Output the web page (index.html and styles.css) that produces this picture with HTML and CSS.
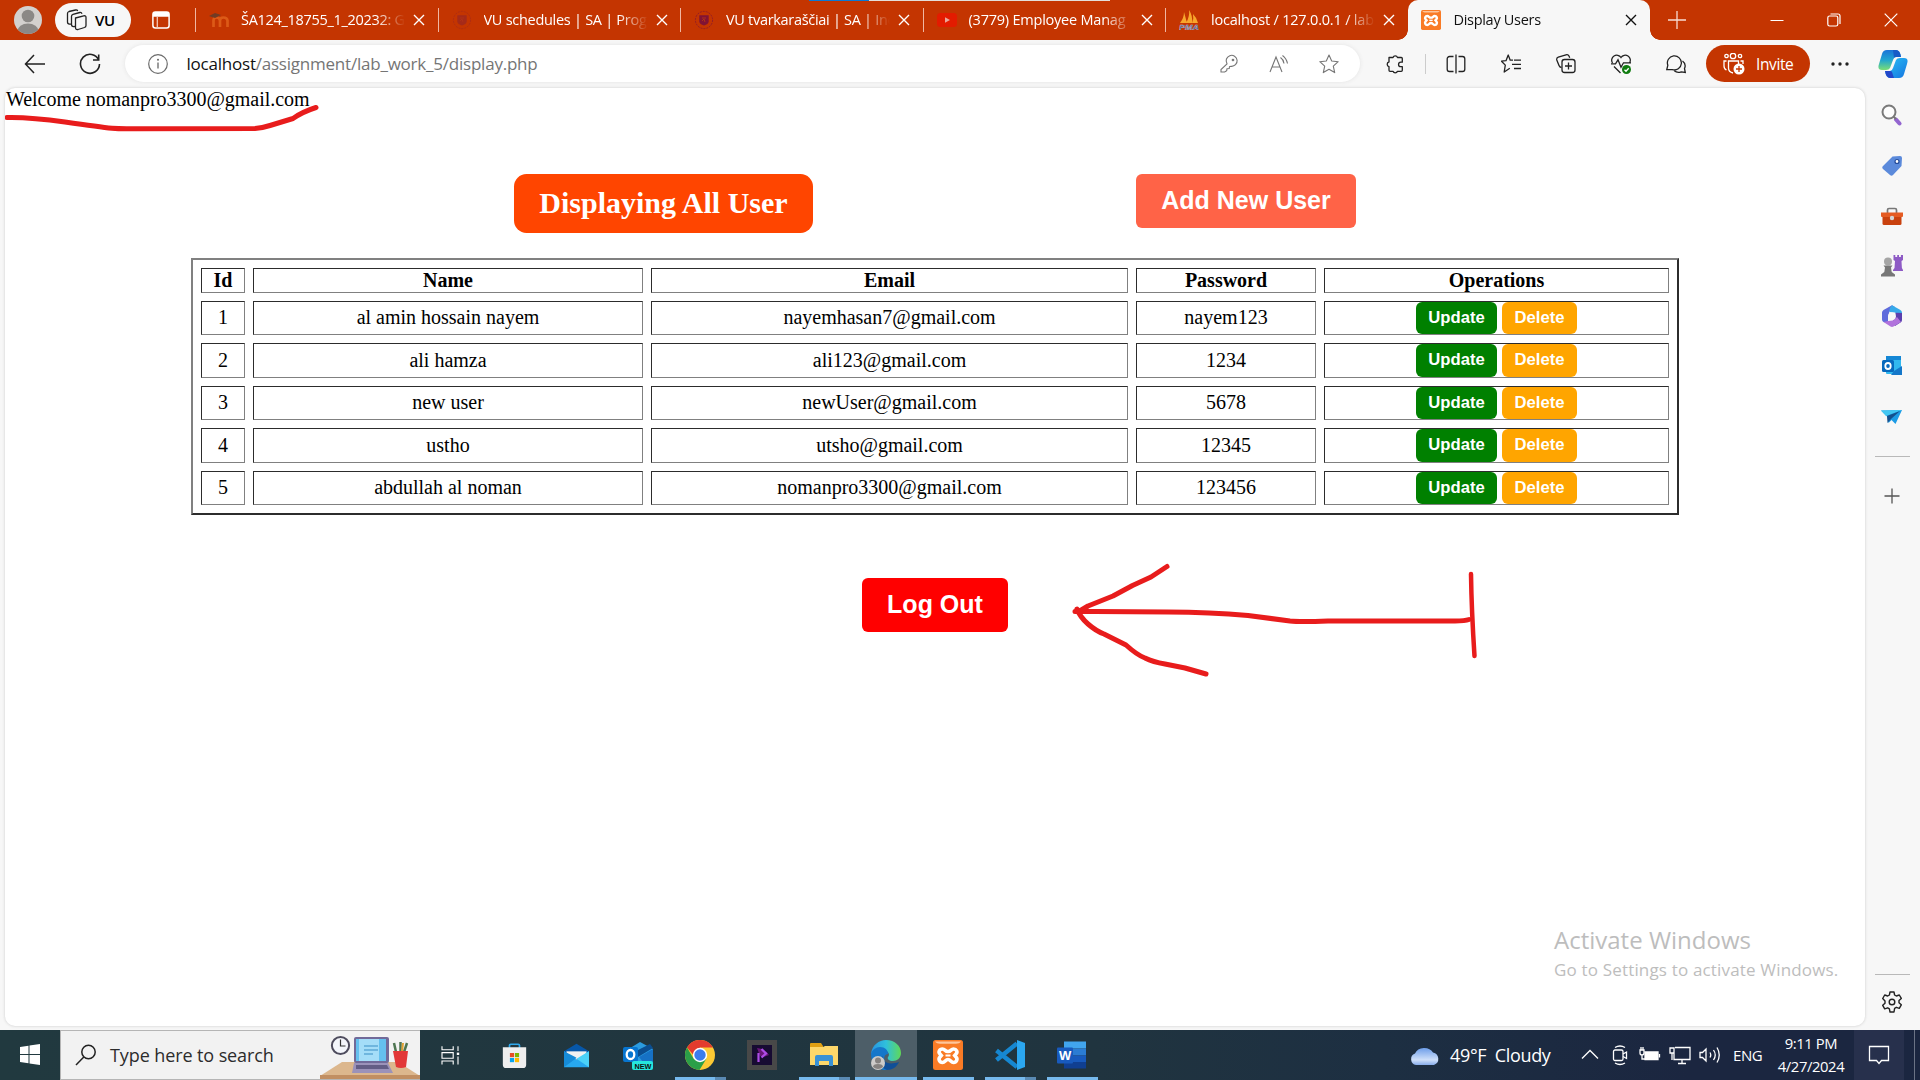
FILE: index.html
```html
<!DOCTYPE html>
<html lang="en">
<head>
<meta charset="utf-8">
<title>Display Users</title>
<link rel="stylesheet" href="styles.css">
</head>
<body>
<svg class="defs" width="0" height="0">
  <defs>
    <symbol id="x" viewBox="0 0 12 12"><path d="M1 1l10 10M11 1L1 11" fill="none" stroke="currentColor" stroke-width="1.400"/></symbol>
    <symbol id="shield" viewBox="0 0 20 20"><circle cx="10" cy="10" r="8.600" fill="none" stroke="currentColor" stroke-width="1" stroke-dasharray="2 1" opacity=".7"/><path d="M5.300 5.300h9.400v6c0 2.200-2 3.400-4.700 4.200-2.700-.8-4.700-2-4.700-4.200z" fill="currentColor"/><path d="M8 8h4M8 11l2-2 1 3" stroke="#b03018" fill="none"/></symbol>
    <symbol id="xampp" viewBox="0 0 30 30"><rect width="30" height="30" rx="2.500" fill="#f97b26"/><path d="M2 1.500h26c-1 1.800-3 2.200-5 2.200H7c-2 0-4-.4-5-2.200z" fill="#fdc59b"/><path d="M9.500 9c-3 0-4.500 3-2.500 5l1.300 1.500L7 17c-2 2-.5 5.500 2.500 5.500 2.500 0 3-3 5.500-3s3 3 5.500 3c3 0 4.500-3.500 2.500-5.500l-1.300-1.500L23 14c2-2 .5-5-2.500-5-2.500 0-2.300 2.500-5.500 2.500S12 9 9.500 9z" fill="none" stroke="#fff" stroke-width="3.600"/><path d="M12.500 15.500h5" stroke="#fff" stroke-width="2"/></symbol>
  </defs>
</svg>

<header class="titlebar">
  <div class="profile"><svg width="28" height="28" viewBox="0 0 28 28"><clipPath id="pc"><circle cx="14" cy="14" r="14"/></clipPath><g clip-path="url(#pc)"><rect width="28" height="28" fill="#d3d0ce"/><circle cx="14" cy="10" r="6.300" fill="#8b8886"/><ellipse cx="14" cy="25" rx="10.500" ry="7.500" fill="#8b8886"/></g></svg></div>
  <div class="workspace"><svg width="22" height="22" viewBox="0 0 22 22" fill="none" stroke="#222" stroke-width="1.300" stroke-linejoin="round"><path d="M9.500 9l8.200-2.200q2.300-.4 2.300 1.700v8q0 1.500-1.500 2l-6.500 2q-2.500.5-2.500-2z"/><path d="M9 17.500l-1.500.2q-2-.2-2-2.200V7.300q0-1.500 1.500-2l6.800-1.800q1.700-.3 2.200 1.200M5 15l-1.500.2q-2-.2-2-2.200V4.500q0-1.500 1.500-2L9.500 1q1.700-.3 2.200 1"/></svg><span>VU</span></div>
  <div class="tabmenu"><svg width="18" height="18" viewBox="0 0 18 18"><rect x=".9" y=".9" width="16.200" height="16.200" rx="2.500" fill="none" stroke="#fff" stroke-width="1.500"/><path d="M1 3a2 2 0 012-2h12a2 2 0 012 2v2.700H1z" fill="#fff"/><path d="M5.300 5v12" stroke="#f5c8b8" stroke-width="1.300"/></svg></div>
  <nav class="tabs">
    <div class="tab"><svg class="fav" viewBox="0 0 20 20"><path d="M4.500 17V10.500q0-3 3-3t3.500 3V17M11 10.500q0-3 3.500-3t4 3V17" fill="none" stroke="#dc5a17" stroke-width="2.700"/><path d="M0 6l6-3 6 2-6 3z" fill="#713b24"/></svg><span class="t t0">ŠA124_18755_1_20232: G</span><svg class="cl"><use href="#x"/></svg></div>
    <div class="tab"><svg class="fav maroon1"><use href="#shield"/></svg><span class="t t1">VU schedules | SA | Prog</span><svg class="cl"><use href="#x"/></svg></div>
    <div class="tab"><svg class="fav maroon2"><use href="#shield"/></svg><span class="t t2">VU tvarkaraščiai | SA | Ind</span><svg class="cl"><use href="#x"/></svg></div>
    <div class="tab"><svg class="fav" viewBox="0 0 20 20"><rect y="3" width="20" height="14" rx="3.500" fill="#e31b00"/><path d="M8 7.200l5 2.800-5 2.800z" fill="#e9a79a"/></svg><span class="t t3">(3779) Employee Manag</span><svg class="cl"><use href="#x"/></svg></div>
    <div class="tab"><svg class="fav" viewBox="0 0 20 20"><path d="M1 13Q5 8 5 2l3 11zM7 13q4-7 3-13 4 6 3 13zM13 13q2-4 1-9 4 4 5 9z" fill="#f8a62c"/><text x="0" y="20" class="pma" textLength="20" lengthAdjust="spacingAndGlyphs">PMA</text></svg><span class="t t4">localhost / 127.0.0.1 / lab</span><svg class="cl"><use href="#x"/></svg></div>
    <div class="tab active"><svg class="fav"><use href="#xampp"/></svg><span class="t t5">Display Users</span><svg class="cl"><use href="#x"/></svg></div>
  </nav>
  <svg class="newtab" width="18" height="18" viewBox="0 0 18 18"><path d="M9 0v18M0 9h18" stroke="#f8dcd2" stroke-width="1.300"/></svg>
  <div class="winctl">
    <svg width="14" height="14" viewBox="0 0 14 14"><path d="M.5 7.500h13" stroke="#fff"/></svg>
    <svg width="14" height="14" viewBox="0 0 14 14" fill="none" stroke="#fff" stroke-width="1.200"><rect x=".8" y="3" width="10" height="10" rx="1.800"/><path d="M3.500 1h7.500a2 2 0 012 2v8"/></svg>
    <svg width="14" height="14" viewBox="0 0 14 14"><path d="M.7.7l12.600 12.600M13.300.7L.7 13.300" stroke="#fff" stroke-width="1.200"/></svg>
  </div>
  <div class="sharebar"></div>
</header>

<section class="toolbar">
  <svg class="back" width="22" height="20" viewBox="0 0 22 20"><path d="M10 1L1.500 10l8.500 9M1.500 10H21" fill="none" stroke="#222" stroke-width="1.500"/></svg>
  <svg class="reload" width="22" height="22" viewBox="0 0 22 22"><path d="M19.700 7A9.500 9.500 0 1020.500 11M19.700 1.500V7H14" fill="none" stroke="#222" stroke-width="1.600"/></svg>
  <div class="omnibox">
    <svg width="20" height="20" viewBox="0 0 20 20"><circle cx="10" cy="10" r="9.300" fill="none" stroke="#6b6b6b" stroke-width="1.200"/><path d="M10 8.500v6" stroke="#666" stroke-width="1.300"/><circle cx="10" cy="5.800" r="1" fill="#666"/></svg>
    <span class="url"><b>localhost</b>/assignment/lab_work_5/display.php</span>
    <div class="omni-icons">
      <svg viewBox="0 0 20 20"><path d="M8 9.800A5.500 5.500 0 1112 12.300l-1.500.3-.3 1.900-2.200.2-.3 2-2 1.300H2v-2.500z"/><circle cx="14" cy="6" r=".8"/></svg>
      <svg viewBox="0 0 20 20"><path d="M1 18L7 3l6 15M3 13h8M11.500 3.500q3 2 3.500 6M13.500 1.500q4 3 5 8"/></svg>
      <svg viewBox="0 0 20 20"><path d="M10 1l2.700 6 6.500.7-4.900 4.400 1.400 6.500L10 15.300l-5.700 3.300 1.400-6.500L.8 7.700l6.500-.7z" stroke-linejoin="round"/></svg>
    </div>
  </div>
  <div class="tools">
    <svg viewBox="0 0 20 20"><path d="M4 3.500h4a2.400 2.400 0 014.500 0h3.800q1 0 1 1v3.700h-1.500a2.200 2.200 0 100 4.500h1.500v3.600q0 1-1 1h-3.800a2.400 2.400 0 01-4.500 0H5q-1 0-1-1v-3.600a2.500 2.500 0 010-4.800z" stroke-linejoin="round"/></svg>
    <i class="vsep"></i>
    <svg viewBox="0 0 20 20"><path d="M7.500 2.500H3.500a2.300 2.300 0 00-2.300 2.300v10.400a2.300 2.300 0 002.300 2.300h4M12.500 2.500h4a2.300 2.300 0 012.300 2.300v10.400a2.300 2.300 0 01-2.300 2.300h-4M10 .5v19"/></svg>
    <svg viewBox="0 0 20 20"><path d="M12 6.200H9.200L7.200 1 5 6.700l-4.500.5 3.800 3.900L3.200 18l5.600-3.700M13 6.200h7M11 10.300h9M13 14.500h7" stroke-linejoin="round"/></svg>
    <svg viewBox="0 0 20 20"><path d="M5.500 13.500Q3.600 13.300 3 11.500L.8 6q-.5-2 1.500-2.800L10 .8q2-.6 3 1.200l.7 1.700"/><rect x="6" y="5.500" width="13" height="13" rx="2.500"/><path d="M12.500 8.500v7M9 12h7"/></svg>
    <svg viewBox="0 0 20 20"><path d="M1.500 9A5 5 0 0110 3.500 5 5 0 0118.500 9M3 12.500l6.500 6.500M0 9.800h4.500l2.500-4 3 7.500 2.500-4.500H20"/><circle cx="15.500" cy="15.500" r="4.500" fill="#107c10" stroke="none"/><path d="M13.500 15.700l1.500 1.500 2.700-3" stroke="#fff"/></svg>
    <svg viewBox="0 0 20 20"><path d="M.8 15.500l1-4.200a7 7 0 114.500 4.300zM16.500 7q4 3 2 7.500l.8 4-4-.7q-4 1.700-7-1"/></svg>
  </div>
  <div class="invite"><svg width="22" height="22" viewBox="0 0 22 22" fill="none" stroke="#fff" stroke-width="1.300"><circle cx="3.500" cy="3" r="1.700"/><circle cx="10" cy="3" r="2.700"/><circle cx="17" cy="3" r="1.700"/><path d="M3.500 17q-2.500-1-2.500-4V8h2.500M10 20q-4.500-1-4.500-5V8h10v3M17.500 8H20v3"/><circle cx="16" cy="16" r="5.500" fill="#fff" stroke="none"/><path d="M16 13v6M13 16h6" stroke="#c43501"/></svg><span>Invite</span></div>
  <svg class="dots" width="18" height="4" viewBox="0 0 18 4"><circle cx="2" cy="2" r="1.700"/><circle cx="9" cy="2" r="1.700"/><circle cx="16" cy="2" r="1.700"/></svg>
  <svg class="copilot" width="30" height="28" viewBox="0 0 30 28"><defs><linearGradient id="cpa" x1="0" y1="0" x2="0" y2="1"><stop offset="0" stop-color="#1a73d8"/><stop offset=".5" stop-color="#20a5d0"/><stop offset="1" stop-color="#7ade75"/></linearGradient><linearGradient id="cpb" x1="0" y1="0" x2="1" y2="1"><stop offset="0" stop-color="#28c3f6"/><stop offset="1" stop-color="#1674e0"/></linearGradient></defs><path d="M9 0h9q4 0 5 7h-5q-2 0-3 3l-3 8q-1 2-4 2H4q-5 0-3-6L4 4q1-4 5-4z" fill="url(#cpa)"/><path d="M21 28h-9q-4 0-5-7h5q2 0 3-3l3-8q1-2 4-2h4q5 0 3 6l-3 10q-1 4-5 4z" fill="url(#cpb)"/><path d="M15 0h3q4 0 5 7h-5q-2 0-2 1z" fill="#175bc7"/><path d="M7 21h5q2 0 2 1l2 6h-4q-4 0-5-7z" fill="#2347ca"/></svg>
</section>

<div class="middle">
  <main class="page">
    <div class="welcome">Welcome nomanpro3300@gmail.com</div>
    <div class="actions">
      <h1>Displaying All User</h1>
      <button class="add">Add New User</button>
    </div>
    <table>
      <colgroup><col class="c1"><col class="c2"><col class="c3"><col class="c4"><col class="c5"></colgroup>
      <tr class="head"><th>Id</th><th>Name</th><th>Email</th><th>Password</th><th>Operations</th></tr>
      <tr><td>1</td><td>al amin hossain nayem</td><td>nayemhasan7@gmail.com</td><td>nayem123</td><td><div class="ops"><button class="upd">Update</button><button class="del">Delete</button></div></td></tr>
      <tr class="tall"><td>2</td><td>ali hamza</td><td>ali123@gmail.com</td><td>1234</td><td><div class="ops"><button class="upd">Update</button><button class="del">Delete</button></div></td></tr>
      <tr><td>3</td><td>new user</td><td>newUser@gmail.com</td><td>5678</td><td><div class="ops"><button class="upd">Update</button><button class="del">Delete</button></div></td></tr>
      <tr class="tall"><td>4</td><td>ustho</td><td>utsho@gmail.com</td><td>12345</td><td><div class="ops"><button class="upd">Update</button><button class="del">Delete</button></div></td></tr>
      <tr><td>5</td><td>abdullah al noman</td><td>nomanpro3300@gmail.com</td><td>123456</td><td><div class="ops"><button class="upd">Update</button><button class="del">Delete</button></div></td></tr>
    </table>
    <button class="logout">Log Out</button>
    <div class="watermark"><p class="w1">Activate Windows</p><p class="w2">Go to Settings to activate Windows.</p></div>
    <svg class="ink" viewBox="5 88 1860 938">
      <path d="M7 117.500Q30 117 65 122T112 128.300Q120 129 135 128.700L255 128.500Q262 128 270 125.500L293 118.500Q302 112 316 107.500"/>
      <path d="M1075 611.500H1095L1168 612Q1210 612 1248 615.500L1290 621Q1300 622 1328 621H1455Q1465 621 1469 619.500"/>
      <path d="M1167 566.500L1151 577 1132.500 585.500 1113 596 1088 606 1078 612M1077 609Q1080 617 1088 624T1104 634L1126 645Q1137 655 1145 658 1153 662 1165 664L1185 668 1206 674"/>
      <path class="bar" d="M1471 574Q1471.500 610 1474.500 656"/>
    </svg>
  </main>
  <aside class="sidebar">
    <svg viewBox="0 0 22 22"><path d="M15 15.500l3.500 4" stroke="#9365d0" stroke-width="4" stroke-linecap="round"/><path d="M12.500 12.500l2.500 2.500" stroke="#777" stroke-width="2"/><circle cx="8" cy="8" r="6.500" fill="#fdfdfd" stroke="#7a7a7a" stroke-width="2"/></svg>
    <svg viewBox="0 0 22 22"><path d="M11.500 2.500L19 2q2 0 2 2l-.5 8-8.500 9q-1.500 1.500-3 0L2 15q-1.500-1.500 0-3z" fill="#5b8adb"/><circle cx="16" cy="7.500" r="2" fill="#fff" stroke="#244b99" stroke-width="1.200"/></svg>
    <svg viewBox="0 0 22 22"><path d="M6.500 8V5q0-1.500 1.500-1.500h6q1.500 0 1.500 1.500v3" fill="none" stroke="#777" stroke-width="1.700"/><rect x="1.500" y="9" width="19" height="11" rx="1.500" fill="#c9410e"/><path d="M0 7.500h22v3.500q0 1-1 1H1q-1 0-1-1z" fill="#e55b22"/><circle cx="11" cy="13" r="2.200" fill="#d5d5d5"/></svg>
    <svg viewBox="0 0 22 22"><path d="M12.500 0h1.800v2h1.900V0h1.800v2h1.900V0H22v5l-1.500 1 .4 7 1.100 2v1H12v-1l1.500-2 .5-7-1.500-1z" fill="#8e5bc5"/><circle cx="7" cy="6.500" r="4" fill="#a5a5a5"/><path d="M2.500 10.500h9l-1.500 2 .7 4.500 3.300 2.500v2H0v-2L3.300 17l.7-4.500z" fill="#777"/></svg>
    <svg viewBox="0 0 22 22"><path d="M11 .3L14 2 8.500 6.500 7 11v7l-4.500-1Q1 16 1 14.500v-7Q1 6 2.500 5z" fill="#5f6bdc"/><path d="M11 .3l8 4.500q2 1 2 3V12l-7-4.500-5.500-.5Q8 3 11 .3z" fill="#37a9e9"/><path d="M21 8v7q0 1.500-1.500 2.500L14 21l-3-4 3.500-5V7.800z" fill="#5a3fae"/><path d="M2.500 17L7 16l5-.5 4-3.500 4 5-7.500 4.500q-1.500.8-3 0z" fill="#b173dc"/><circle cx="11" cy="11.200" r="3.800" fill="#f7f7f7"/></svg>
    <svg viewBox="0 0 22 22"><rect x="5" y="1" width="15" height="18" rx="1" fill="#32b8ef"/><path d="M5 1h15v4H5z" fill="#1587d5"/><path d="M10 20h11v-9l-8 5z" fill="#1477c9"/><rect x="1" y="5" width="12" height="12" rx="1.500" fill="#0769bd"/><ellipse cx="7" cy="11" rx="2.700" ry="3" fill="none" stroke="#fff" stroke-width="1.800"/></svg>
    <svg viewBox="0 0 22 22"><path d="M0 4.500L21 4l-6.500 14-4-4-3 3-1-6z" fill="#1c9be5"/><path d="M0 4.500L21 4 5 10z" fill="#43c7f2"/><path d="M6 10l13-5-9 8-3.500 4z" fill="#14508d"/></svg>
    <hr>
    <svg viewBox="0 0 22 22"><path d="M11 3.500v15M3.500 11h15" stroke="#555" stroke-width="1.300"/></svg>
    <div class="spacer"></div>
    <hr class="low">
    <svg class="gear" viewBox="0 0 22 22" fill="none" stroke="#222" stroke-width="1.400" stroke-linejoin="round"><path d="M9 1h4l.6 3L15.300 5l3-1 2 3.400-2.300 2.100v2.200l2.300 2.100-2 3.500-3-1-1.700 1L13 21H9l-.6-3.200-1.700-1-3 1-2-3.500L4 12.200V10L1.700 7.500l2-3.500 3 1 1.700-1z"/><circle cx="11" cy="11" r="2.800"/></svg>
  </aside>
</div>

<footer class="taskbar">
  <div class="start"><svg width="20" height="21" viewBox="0 0 20 21" fill="#fff"><path d="M0 3l8.500-1.200V10H0zM9.500 1.600L20 0v10H9.500zM0 11h8.500v8.200L0 18zM9.500 11H20v10L9.500 19.400z"/></svg></div>
  <div class="search"><svg width="22" height="22" viewBox="0 0 22 22" fill="none" stroke="#222" stroke-width="1.500"><circle cx="13.500" cy="8" r="6.700"/><path d="M8.800 13L1 21"/></svg><span>Type here to search</span>
    <svg class="art" width="100" height="47" viewBox="320 1032 100 47"><path d="M320 1076l22-14h56l22 14z" fill="#dcb78d"/><path d="M320 1075h100v4H320z" fill="#c18f62"/><circle cx="340.500" cy="1045.500" r="8.600" fill="#f4f6fb" stroke="#4e4c5d" stroke-width="2"/><path d="M340.500 1039.500v6.500h5" fill="none" stroke="#333" stroke-width="1.200"/><rect x="354" y="1037" width="35" height="26" rx="2" fill="#716a99"/><rect x="356" y="1039" width="30" height="22" fill="#65c0ee"/><path d="M359 1039h20v22h-20z" fill="#a4ddf8"/><path d="M364 1046h14M364 1050h14M364 1054h9" stroke="#3b8fc5"/><path d="M354 1063h34l5 10h-41z" fill="#9b92b9"/><path d="M356 1065h31l2 4h-33z" fill="#635d85"/><path d="M396 1052l-2-9M400.500 1052v-10M404 1052l3-9" stroke="#4e7551" stroke-width="2.500"/><path d="M402 1052l1-9" stroke="#e2a130" stroke-width="2"/><path d="M393 1051h15l-2 16q-5 2-10 0z" fill="#e23838"/></svg>
  </div>
  <div class="apps">
    <div class="app"><svg viewBox="0 0 30 30" fill="none" stroke="#fff" stroke-width="1.400"><path d="M5 4v4.500h14V4M5 27v-4.500h14V27M5 12h14v7H5zM25 4v6M25 17v10"/><rect x="23.500" y="12" width="3" height="3" fill="#fff" stroke="none"/></svg></div>
    <div class="app"><svg viewBox="0 0 30 30"><path d="M9 8V3q0-1.500 1.500-1.500h9Q21 1.500 21 3v5" fill="none" stroke="#2fa8ec" stroke-width="2"/><path d="M1 5h28v21q0 4-4 4H5q-4 0-4-4z" fill="#eee"/><path fill="#e64f26" d="M9.500 12H14.500v5h-5z"/><path fill="#7eb700" d="M15.500 12h5v5h-5z"/><path fill="#08a4ed" d="M9.500 18h5v5h-5z"/><path fill="#ffb900" d="M15.500 18h5v5h-5z"/></svg></div>
    <div class="app"><svg viewBox="0 0 30 30"><path d="M0 10L15 1l15 9v4H0z" fill="#0757a8"/><path d="M3 10h24v10H3z" fill="#f1f1f1"/><path d="M0 10l15 10 15-10v19H0z" fill="#27a8ef"/><path d="M0 29L15 18l-1-1L0 10z" fill="#168bd8"/><path d="M15 19l15-9v19z" fill="#4bd2f8"/></svg></div>
    <div class="app"><svg viewBox="0 0 30 30"><path d="M4 10L17 2l13 7v13q0 4-6 6H11z" fill="#2b9bdf"/><path d="M15 10l12-6 3 4-15 9z" fill="#0b4d8f"/><path d="M16 17l14-8v13q0 5-6 5z" fill="#1671c5"/><rect x="0" y="7" width="15" height="15" rx="2" fill="#0875cf"/><ellipse cx="7.500" cy="14.500" rx="3.800" ry="4.500" fill="none" stroke="#fff" stroke-width="2.300"/><rect x="9" y="21" width="21" height="9" rx="2" fill="#25e6dd"/><text x="11.500" y="28.500" class="new" textLength="17" lengthAdjust="spacingAndGlyphs">NEW</text></svg></div>
    <div class="app"><svg viewBox="0 0 30 30"><circle cx="15" cy="15" r="15" fill="#fcc934"/><path d="M2 7.500A15 15 0 0128 7.500H15v15z" fill="#e33b2e"/><path d="M2 7.500A15 15 0 0014.500 30l7-11.500L8.500 18.500z" fill="#2b9f48"/><circle cx="15" cy="15" r="7.200" fill="#fff"/><circle cx="15" cy="15" r="5.700" fill="#3b7ced"/></svg><i class="ul u40"></i><i class="ul dim"></i></div>
    <div class="app"><svg viewBox="0 0 30 30"><rect width="30" height="30" fill="#484848"/><rect x="5" y="5" width="20" height="20" fill="#170b32"/><path d="M10 8q8 1 12 7-6 3-9 1" fill="#6a1679"/><path d="M11.500 22V13M14.500 9l4.500 4.500-4.500 4" fill="none" stroke="#ae4ce7" stroke-width="2.200"/></svg></div>
    <div class="app"><svg viewBox="0 0 30 30"><path d="M1 4q0-1 1-1h10l2 3v4H1z" fill="#e0a013"/><path d="M1 7h13l2-1h13v19H1z" fill="#fdd76a"/><path d="M6 26V17q0-2 2-2h14q2 0 2 2v9h-4v-5h-10v5z" fill="#3991d5"/></svg><i class="ul u40"></i><i class="ul dim"></i></div>
    <div class="app on"><svg viewBox="0 0 30 30"><defs><linearGradient id="eg"><stop offset="0" stop-color="#2893e2"/><stop offset=".5" stop-color="#2fc0dc"/><stop offset="1" stop-color="#60d957"/></linearGradient></defs><path d="M0 14C1 5 8 0 15 0c9 0 15 6 15 13 0 5-4 8-8 8-4 0-6-2-5-4 2-2 1-6-4-7-5 0-10 1-13 4z" fill="url(#eg)"/><path d="M0 14c1-4 5-7 9-7 5 0 8 3 8 7-6 0-5 10 3 14-3 2-5 2-7 2C5 29 0 22 0 14z" fill="#1577ca"/><path d="M12 16c-1 5 4 10 16 6-2 5-7 8-12 8-6-2-9-9-4-14z" fill="#104f98"/><circle cx="7" cy="23" r="7" fill="#cdcbc9"/><circle cx="7" cy="20.500" r="3" fill="#858280"/><path d="M2 27q0-3 5-3t5 3q-5 4-10 0z" fill="#858280"/></svg><i class="ul full"></i></div>
    <div class="app"><svg><use href="#xampp"/></svg><i class="ul u51"></i></div>
    <div class="app"><svg viewBox="0 0 30 30"><path d="M1.500 10.500L22 27M1.500 20L22 3.500" stroke="#1687d1" stroke-width="4.500"/><path d="M22 0l8 3v24l-8 3z" fill="#2ba7f1"/></svg><i class="ul u40"></i><i class="ul dim"></i></div>
    <div class="app"><svg viewBox="0 0 30 30"><path fill="#41a5ee" d="M7 1.500h22v7H7z"/><path fill="#2b7cd3" d="M7 8.500h22v7H7z"/><path fill="#185abd" d="M7 15.500h22v6.500H7z"/><path fill="#103f91" d="M7 22h22v6.500H7z"/><rect x="0" y="7.500" width="16" height="16" rx="1" fill="#185abd"/><text x="2" y="20" class="word">W</text></svg><i class="ul u51"></i></div>
  </div>
  <div class="tray">
    <div class="weather"><svg width="30" height="21" viewBox="0 0 30 21"><defs><linearGradient id="cl" x1="0" y1="0" x2="0" y2="1"><stop offset="0" stop-color="#6c9de9"/><stop offset=".7" stop-color="#cfe0fa"/><stop offset="1" stop-color="#87aceb"/></linearGradient></defs><path d="M6 20a6 6 0 01-1-11.500A10 9 0 0123 7.500a6.500 6.500 0 011 12.500z" fill="url(#cl)"/></svg><span>49°F&nbsp; Cloudy</span></div>
    <svg viewBox="0 0 22 22"><path d="M3 14.500L11 6.500l8 8"/></svg>
    <svg viewBox="0 0 22 22"><rect x="4.500" y="6" width="9.500" height="10.500" rx="1.500"/><path d="M14 10l3.500-2v6.500L14 12.500M6 3.500Q11 .5 16 3.500M6 19q5 3 10 0"/></svg>
    <svg viewBox="0 0 22 22"><path d="M6 8h13v7.500H6z" fill="#fff"/><path d="M20.500 10v3.500M1 6v3q0 2 2 2t2-2V6zM2 3v3M4 3v3M3 11v4h3"/></svg>
    <svg viewBox="0 0 22 22"><path d="M6 3.500h15v12H5V9M13 15.500v4M9 19.500h8M1 4h4v5H1zM3 9v7"/></svg>
    <svg viewBox="0 0 22 22"><path d="M1 8.500h2.500L7 5v12l-3.500-3.500H1zM11 8.500q1.500 2.500 0 5M14.500 6q3.500 5 0 10M18 3.500q4.500 7.500 0 15"/></svg>
    <div class="lang">ENG</div>
    <div class="clock"><span class="time">9:11 PM</span><span class="date">4/27/2024</span></div>
    <div class="notif"><svg viewBox="0 0 22 22"><path d="M1.500 2.500h19v14h-7l-2.500 3-2.500-3h-7z"/></svg></div>
    <i class="edge"></i>
  </div>
</footer>
</body>
</html>
```
FILE: styles.css
```css
* { box-sizing: border-box; }
html, body { margin: 0; width: 1920px; height: 1080px; overflow: hidden; }
body {
  display: flex; flex-direction: column;
  background: #f7f7f7; color: #000;
  font-family: "Open Sans", "Noto Sans", sans-serif;
}
svg { display: block; flex: none; }
.defs { position: absolute; }

/* title bar */
.titlebar { position: relative; height: 40px; flex: none; display: flex; align-items: center; background: #c43501; }
.profile { width: 55px; padding-left: 14px; }
.workspace {
  width: 76px; height: 34px; border-radius: 17px; background: #f7f7f7;
  display: flex; align-items: center; padding-left: 11px; gap: 7px; font-size: 15px;
  font-weight: 600; letter-spacing: -.3px; line-height: 32px;
}
.tabmenu { width: 64px; padding-left: 21px; }
.tabs { display: flex; height: 40px; align-self: flex-start; }
.tab { width: 242.5px; height: 40px; display: flex; align-items: center; position: relative; color: #fff; padding-left: 14px; }
.tab::before { content: ""; width: 1px; height: 24px; background: #f0b7a2; position: absolute; left: 0; top: 8px; }
.fav { width: 20px; height: 20px; margin-right: 12px; }
.maroon1 { color: #a52a19; }
.maroon2 { color: #811334; }
.t {
  width: 164px; font-size: 14.5px; line-height: 40px; white-space: nowrap; overflow: hidden; letter-spacing: -.3px;
  -webkit-mask-image: linear-gradient(90deg, #000 82%, transparent 100%);
  mask-image: linear-gradient(90deg, #000 82%, transparent 100%);
}
.t1 { letter-spacing: -.28px; }
.t3 { letter-spacing: -.22px; }
.t4 { letter-spacing: -.2px; }
.cl { width: 12px; height: 12px; margin-left: 8px; }
.pma { font: italic bold 8px "Liberation Sans", sans-serif; fill: #33447b; stroke: #c9c4d5; stroke-width: .4px; }
.active { background: #f7f7f7; border-radius: 10px 10px 0 0; color: #111; padding-left: 13px; }
.active .fav { margin-right: 13px; }
.active .cl { margin-left: 7px; }
.active::before, .active::after {
  content: ""; position: absolute; top: 30px; width: 10px; height: 10px;
  background: radial-gradient(circle at 0 0, transparent 9.500px, #f7f7f7 10px);
}
.active::before { left: -10px; }
.active::after { right: -10px; background: radial-gradient(circle at 100% 0, transparent 9.500px, #f7f7f7 10px); }
.newtab { margin-left: 18px; }
.winctl { margin-left: auto; display: flex; gap: 43px; padding-right: 22px; }
.sharebar { position: absolute; left: 809px; top: 0; width: 301px; height: 1px; background: linear-gradient(90deg, #0a78d4 60px, #e3dedb 60px); }

/* toolbar */
.toolbar { height: 48px; flex: none; display: flex; align-items: center; padding-bottom: 1px; }
.back { margin-left: 24px; }
.reload { margin-left: 33px; }
.omnibox {
  margin-left: 24px; width: 1235px; height: 37px; border-radius: 19px; background: #fff;
  box-shadow: 0 0 4px #e3e3e3; display: flex; align-items: center; padding: 0 21px 0 22.500px;
}
.url { margin-left: 19px; font-size: 17px; letter-spacing: -.22px; color: #757575; white-space: nowrap; }
.url b { color: #111; font-weight: 400; }
.omni-icons { margin-left: auto; display: flex; gap: 30px; }
.omni-icons svg, .tools svg { width: 20px; height: 20px; fill: none; stroke: #757575; stroke-width: 1.100; }
.tools { display: flex; align-items: center; gap: 35px; margin-left: 25px; }
.tools svg { stroke: #222; stroke-width: 1.300; }
.vsep { width: 1px; height: 20px; background: #ccc; margin: 0 -15px; }
.invite {
  width: 104px; height: 37px; border-radius: 19px; margin-left: 20px; background: #c43501; color: #fff;
  display: flex; align-items: center; gap: 11px; padding-left: 17px; font-size: 15.500px; letter-spacing: -.4px;
}
.dots { margin-left: 21px; fill: #222; }
.copilot { margin-left: 29px; }

/* viewport */
.middle { flex: none; height: 942px; display: flex; padding-left: 5px; }
.page {
  position: relative; width: 1860px; height: 938px; border-radius: 10px; background: #fff;
  box-shadow: 0 0 3px #c9c9c9; font: 20px/23px "Liberation Serif", "Times New Roman", serif;
}
.welcome { padding: 0 0 0 1px; letter-spacing: -.035px; }
.actions { display: flex; gap: 323px; padding-left: 509px; margin-top: 63px; height: 59px; align-items: flex-start; }
h1 { margin: 0; width: 299px; height: 59px; border-radius: 12.500px; background: #ff4500; color: #fff; text-align: center; font-size: 30px; line-height: 58px; }
button { border: 0; padding: 0; font-family: "Liberation Sans", Arial, sans-serif; font-weight: 700; color: #fff; }
.add, .logout { font-size: 25px; height: 54px; border-radius: 6px; background: #ff6347; padding-bottom: 1px; }
.add { width: 220px; }
table {
  width: 1488px; height: 257px; table-layout: fixed; margin: 25px 0 0 186px;
  border: 2px outset gray; border-spacing: 8px; border-collapse: separate;
}
.c1 { width: 44px; } .c2 { width: 390px; } .c3 { width: 477px; } .c4 { width: 180px; } .c5 { width: 345px; }
td, th { border: 1px inset gray; padding: 0; text-align: center; line-height: 23px; vertical-align: middle; }
table, td, th { border-color: gray; }
tr { height: 34px; }
td:not(:last-child) { padding-bottom: 1px; }
.tall { height: 35px; }
.head { height: 25px; }
.ops { display: flex; justify-content: center; gap: 5px; height: 32px; }
.tall .ops { height: 33px; }
.ops button { font-size: 16.670px; border-radius: 6px; padding-bottom: 1px; }
.upd { width: 81px; background: green; }
.del { width: 75px; background: orange; }
.logout { display: block; width: 146px; margin: 63px 0 0 857px; background: red; }
.watermark { position: absolute; left: 1549px; top: 833px; font-family: "Open Sans", "Noto Sans", sans-serif; color: #bdbdbd; white-space: nowrap; }
.watermark p { margin: 0; }
.w1 { font-size: 24px; line-height: 37px; }
.w2 { font-size: 17px; line-height: 24px; letter-spacing: .17px; }
.ink { position: absolute; left: 0; top: 0; width: 1860px; height: 938px; fill: none; stroke: #e81c1c; stroke-width: 5px; stroke-linecap: round; stroke-linejoin: round; }
.ink .bar { stroke-width: 4.500px; }

/* side bar */
.sidebar { width: 55px; height: 942px; display: flex; flex-direction: column; align-items: center; gap: 28.300px; padding: 16px 1px 0 0; }
.sidebar svg { width: 22px; height: 22px; }
.sidebar hr { width: 35px; height: 1px; border: 0; background: #b9b9b9; margin: 0; }
.spacer { flex: 1; margin: -28px 0; }
.sidebar .gear { margin: -12px 0 17px; }

/* task bar */
.taskbar { height: 50px; flex: none; display: flex; background: linear-gradient(90deg, #21393f, #20343f 57%, #1d2f42 72%, #1b2640 88%); color: #fff; }
.start { width: 60px; padding: 14px 0 0 20px; }
.search { width: 360px; height: 50px; background: #f2f2f2; border: 1px solid #b5b5b5; border-right: 0; color: #2c2c2c; display: flex; align-items: center; padding-left: 14px; }
.search span { margin-left: 13px; font-size: 18px; letter-spacing: -.1px; white-space: nowrap; }
.art { margin: 1px 0 0 auto; }
.apps { display: flex; }
.app { width: 62px; height: 50px; position: relative; display: flex; align-items: center; justify-content: center; }
.apps .app:first-child { width: 64px; padding-right: 5px; margin-right: -1px; }
.app > svg { width: 30px; height: 30px; }
.app:nth-child(2) > svg, .app:nth-child(3) > svg { width: 25px; height: 29px; }
.app:first-child > svg { width: 24px; height: 26px; }
.on { background: #4d5e68; }
.ul { position: absolute; left: 6px; bottom: 0; height: 3px; width: 40px; background: #76b9ed; }
.dim { left: 46px; width: 11px; background: #5a8ab3; }
.full { left: 0; width: 62px; }
.u51 { width: 51px; }
.new { font: bold 7.500px "Liberation Sans", sans-serif; fill: #111; }
.word { font: bold 13px "Liberation Sans", sans-serif; fill: #fff; }
.tray { margin-left: auto; display: flex; align-items: center; }
.tray > svg { width: 22px; height: 22px; margin-right: 8px; }
.tray svg { fill: none; stroke: #fff; stroke-width: 1.300; }
.weather { display: flex; align-items: center; gap: 10px; width: 169px; font-size: 18px; letter-spacing: -.35px; white-space: nowrap; }
.weather svg { stroke: none; }
.lang { font-size: 15px; width: 39px; padding-left: 4px; letter-spacing: -.4px; }
.clock { width: 86px; display: flex; flex-direction: column; align-items: center; font-size: 14.800px; line-height: 23px; letter-spacing: -.4px; }
.notif { width: 50px; height: 50px; background: #27304c; padding: 14px; }
.notif svg { width: 22px; height: 22px; }
.edge { width: 1px; height: 50px; background: #6b7385; margin: 0 5px 0 10px; }
```
